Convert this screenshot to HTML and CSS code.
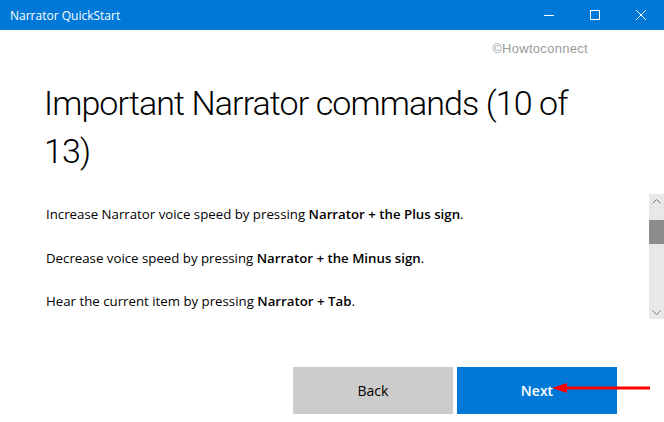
FILE: index.html
```html
<!DOCTYPE html>
<html>
<head>
<meta charset="utf-8">
<link rel="stylesheet" href="styles.css">
</head>
<body>
<div class="window">
  <div class="titlebar">
    <div class="title">Narrator QuickStart</div>
    <div class="controls">
      <div class="ctl"><svg width="12" height="12" viewBox="0 0 12 12"><path d="M1 6.5H11" stroke="#fff" stroke-width="1"/></svg></div>
      <div class="ctl"><svg width="12" height="12" viewBox="0 0 12 12"><rect x="1.5" y="1.5" width="9" height="9" fill="none" stroke="#fff" stroke-width="1"/></svg></div>
      <div class="ctl"><svg width="12" height="12" viewBox="0 0 12 12"><path d="M1 1L11 11M11 1L1 11" stroke="#fff" stroke-width="1"/></svg></div>
    </div>
  </div>
  <div class="content">
    <div class="watermark">©Howtoconnect</div>
    <h1 class="heading">Important Narrator commands (10 of 13)</h1>
    <div class="body-area">
      <div class="text-col">
        <p class="line">Increase Narrator voice speed by pressing <b>Narrator + the Plus sign</b>.</p>
        <p class="line">Decrease voice speed by pressing <b>Narrator + the Minus sign</b>.</p>
        <p class="line">Hear the current item by pressing <b>Narrator + Tab</b>.</p>
      </div>
      <div class="scrollbar">
        <div class="sb-arrow"><svg width="9" height="5" viewBox="0 0 9 5"><path d="M0.5 4.5L4.5 0.5L8.5 4.5" fill="none" stroke="#777" stroke-width="1"/></svg></div>
        <div class="sb-track"><div class="sb-thumb"></div></div>
        <div class="sb-arrow"><svg width="9" height="5" viewBox="0 0 9 5"><path d="M0.5 0.5L4.5 4.5L8.5 0.5" fill="none" stroke="#777" stroke-width="1"/></svg></div>
      </div>
    </div>
    <div class="footer">
      <button class="btn btn-back">Back</button>
      <button class="btn btn-next">Next</button>
    </div>
  </div>
  <svg class="annot" width="110" height="14" viewBox="0 0 110 14">
    <path d="M14 7H98" stroke="#f00" stroke-width="3"/>
    <path d="M0 7L15 2V12Z" fill="#f00"/>
  </svg>
</div>
</body>
</html>
```
FILE: styles.css
```css
* { box-sizing: border-box; }
html, body { margin: 0; padding: 0; background: #fff; }
body { font-family: "Open Sans", "Noto Sans", "Liberation Sans", sans-serif; }
.window { position: relative; width: 664px; height: 422px; overflow: hidden; }
.titlebar {
  height: 30px;
  background: #0078d7;
  color: #fff;
  display: flex;
  align-items: center;
  justify-content: space-between;
}
.title { font-size: 12px; padding-left: 10px; }
.controls { display: flex; height: 30px; }
.ctl { width: 46px; height: 30px; display: flex; align-items: center; justify-content: center; }
.ctl svg { display: block; }
.content { display: flex; flex-direction: column; }
.watermark {
  align-self: flex-end;
  margin: 10px 76px 0 0;
  font-size: 13px;
  color: #9a9a9a;
  line-height: 18px;
  font-family: "Liberation Sans", sans-serif;
  letter-spacing: 0.3px;
}
.heading {
  margin: 21px 0 0 44px;
  width: 560px;
  font-family: Roboto, "Open Sans", sans-serif;
  font-size: 34px;
  letter-spacing: -0.9px;
  font-weight: 300;
  line-height: 48px;
  color: #000;
}
.body-area {
  display: flex;
  justify-content: space-between;
  margin-top: 19px;
  height: 125px;
}
.text-col { padding: 11px 0 0 46px; }
.line { margin: 0 0 24px 0; font-size: 13.25px; line-height: 19.5px; color: #000; }
.line b { font-weight: 600; }
.scrollbar {
  width: 15px;
  height: 125px;
  background: #e8e8e8;
  display: flex;
  flex-direction: column;
}
.sb-arrow { height: 14px; display: flex; align-items: center; justify-content: center; }
.sb-arrow svg { display: block; }
.sb-track { flex: 1; padding-top: 12px; }
.sb-thumb { height: 24px; background: #8c8c8c; }
.footer {
  display: flex;
  justify-content: flex-end;
  gap: 4px;
  padding-right: 47px;
  margin-top: 48px;
}
.btn {
  width: 160px;
  height: 47px;
  border: none;
  font-family: "Open Sans", "Noto Sans", sans-serif;
  font-size: 14px;
  padding: 0;
}
.btn-back { background: #cccccc; color: #000; }
.btn-next { background: #0078d7; color: #fff; font-weight: 600; }
.annot { position: absolute; left: 552px; top: 381px; }
```
